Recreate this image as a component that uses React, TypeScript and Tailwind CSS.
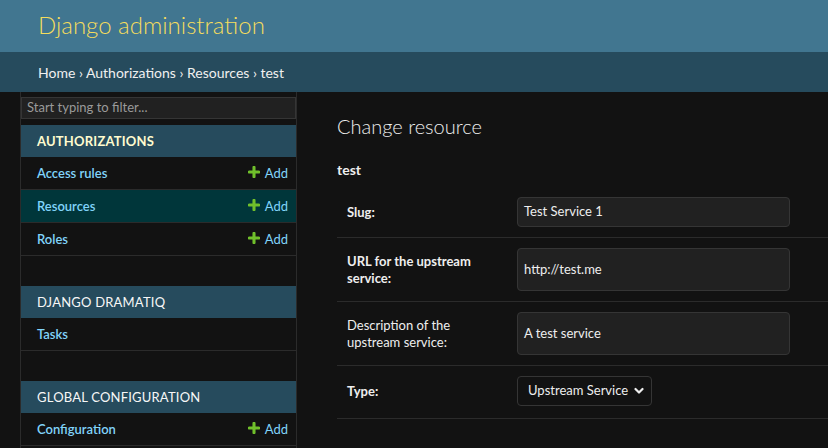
const font = "font-['Segoe_UI','Lato',sans-serif]";

function PlusIcon() {
  return (
    <svg width="12" height="12" viewBox="0 0 14 14" className="mr-[5px] -mt-[3px]">
      <path d="M7 1.5v11M1.5 7h11" stroke="#70bf2b" strokeWidth="3.6" strokeLinecap="round" />
    </svg>
  );
}

type Row = { name: string; add?: boolean; selected?: boolean };

function Module({ caption, current, rows }: { caption: string; current?: boolean; rows: Row[] }) {
  return (
    <div className="mb-[30px]">
      <div
        className={`h-[32px] flex items-center pl-[16px] pt-[1px] bg-[#264b5d] text-[13px] tracking-[0.2px] ${
          current ? 'font-bold text-[#fffccf]' : 'text-[#f7f7f7]'
        }`}
      >
        {caption}
      </div>
      {rows.map(r => (
        <div
          key={r.name}
          className={`h-[33px] flex items-center justify-between pl-[16px] pr-[8px] pt-[1px] border-b border-[#2b2b2b] text-[13px] ${
            r.selected ? 'bg-[#00363a]' : ''
          }`}
        >
          <span className="font-semibold text-[#81d4fa]">{r.name}</span>
          {r.add && (
            <span className="flex items-center text-[#81d4fa]">
              <PlusIcon />
              Add
            </span>
          )}
        </div>
      ))}
    </div>
  );
}

function FormRow({ label, bold, children, pad = 'py-[10px]' }: { label: React.ReactNode; bold?: boolean; children: React.ReactNode; pad?: string }) {
  return (
    <div className={`flex items-stretch border-b border-[#2b2b2b] ${pad}`}>
      <div className={`w-[180px] pl-[10px] pr-[10px] flex items-center text-[13px] leading-[17px] ${bold ? 'font-bold' : ''}`}>
        {label}
      </div>
      {children}
    </div>
  );
}

export default function App() {
  return (
    <div className={`w-[828px] h-[448px] overflow-hidden bg-[#121212] text-[#eeeeee] ${font}`}>
      <div className="h-[52px] bg-[#417690] flex items-center pl-[38px]">
        <h1 className="text-[24px] font-light text-[#f5dd5d] leading-none -mt-[2px]">Django administration</h1>
      </div>
      <div className="h-[40px] bg-[#264b5d] flex items-center pl-[38px] text-[14px] text-[#f0f0f0]">
        Home › Authorizations › Resources › test
      </div>
      <div className="flex">
        <div className="w-[21px] border-r border-[#2b2b2b] shrink-0" />
        <div className="w-[276px] border-r border-[#2b2b2b] shrink-0 pt-[5px]">
          <div className="h-[22px] bg-[#212121] border border-[#353535] flex items-center pl-[5px] text-[13px] text-[#9a9a9a] mb-[6px]">
            Start typing to filter...
          </div>
          <Module
            caption="AUTHORIZATIONS"
            current
            rows={[
              { name: 'Access rules', add: true },
              { name: 'Resources', add: true, selected: true },
              { name: 'Roles', add: true },
            ]}
          />
          <Module caption="DJANGO DRAMATIQ" rows={[{ name: 'Tasks' }]} />
          <Module caption="GLOBAL CONFIGURATION" rows={[{ name: 'Configuration', add: true }]} />
        </div>
        <div className="flex-1 pl-[40px] pt-[19px]">
          <h2 className="text-[20px] font-light text-[#eeeeee] leading-[30px]">Change resource</h2>
          <h3 className="text-[14px] font-bold mt-[19px] mb-[7px] leading-[20px]">test</h3>
          <FormRow label="Slug:" bold>
            <div className="w-[273px] h-[30px] bg-[#212121] border border-[#353535] rounded-[4px] flex items-center px-[6px] text-[13px]">
              Test Service 1
            </div>
          </FormRow>
          <FormRow label={<span>URL for the upstream<br />service:</span>} bold>
            <div className="w-[273px] h-[43px] bg-[#212121] border border-[#353535] rounded-[4px] flex items-center px-[6px] text-[13px]">
              http://test.me
            </div>
          </FormRow>
          <FormRow label={<span>Description of the<br />upstream service:</span>}>
            <div className="w-[273px] h-[43px] bg-[#212121] border border-[#353535] rounded-[4px] flex items-center px-[6px] text-[13px]">
              A test service
            </div>
          </FormRow>
          <FormRow label="Type:" bold pad="pt-[10px] pb-[12px]">
            <div className="w-[135px] h-[30px] bg-[#121212] border border-[#353535] rounded-[4px] flex items-center justify-between pl-[10px] pr-[7px] text-[13px] whitespace-nowrap">
              Upstream Service
              <svg width="10" height="8" viewBox="0 0 10 8">
                <path d="M1.5 2 5 5.5 8.5 2" stroke="#eeeeee" strokeWidth="2.2" fill="none" strokeLinecap="round" strokeLinejoin="round" />
              </svg>
            </div>
          </FormRow>
        </div>
      </div>
    </div>
  );
}
